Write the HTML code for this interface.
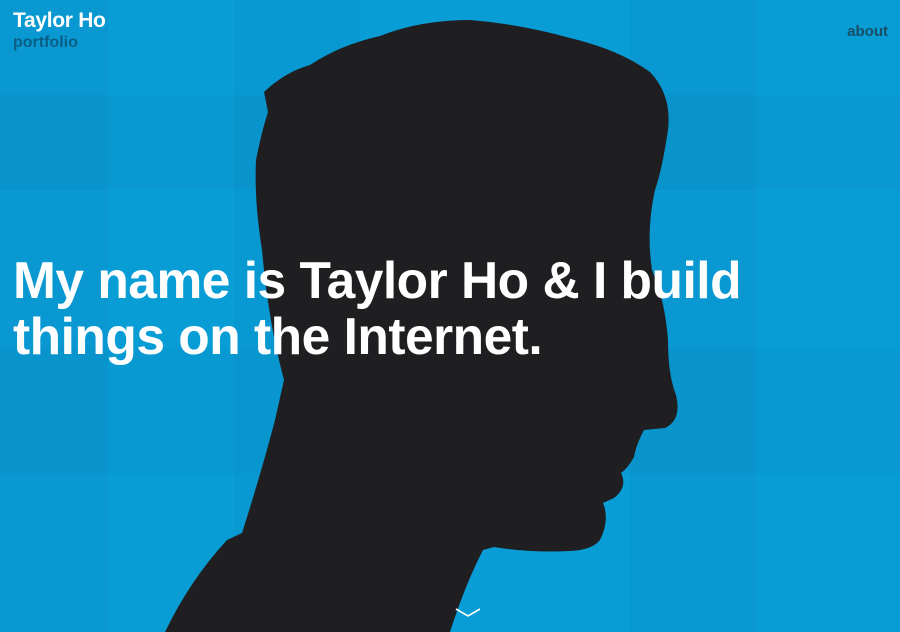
<!DOCTYPE html>
<html><head><meta charset="utf-8"><style>
html,body{margin:0;padding:0;width:900px;height:632px;overflow:hidden;background:#0a9fd8;font-family:"Liberation Sans",Arial,sans-serif}
.bg{position:absolute;inset:0;background:
linear-gradient(90deg,rgba(0,60,110,.05) 0 12%,transparent 12% 26%,rgba(0,60,110,.04) 26% 40%,transparent 40% 70%,rgba(0,60,110,.05) 70% 84%,transparent 84%),
linear-gradient(180deg,transparent 0 15%,rgba(0,50,100,.05) 15% 30%,transparent 30% 55%,rgba(0,50,100,.04) 55% 75%,transparent 75%),#099dd6}
svg{position:absolute;left:0;top:0}
.t1{position:absolute;left:13px;top:9px;color:#fff;font-weight:bold;font-size:21px;letter-spacing:-0.3px}
.t2{position:absolute;left:13px;top:34px;color:#0b5f86;font-weight:bold;font-size:16px}
.ab{position:absolute;right:12px;top:23px;color:#1b4e66;font-weight:bold;font-size:15px}
h1{position:absolute;left:13px;top:252px;margin:0;color:#fff;font-size:51.5px;line-height:56px;font-weight:bold;letter-spacing:-0.5px;width:850px}
</style></head><body>
<div class="bg"></div>
<svg width="900" height="632" viewBox="0 0 900 632">
<path fill="#1f1f22" d="M165,632 Q190,580 227,540 L242,533 Q262,470 275,420 L284,380 Q268,320 262,250 Q254,200 256,160 Q262,130 268,112 L264,92 Q285,72 310,65 Q340,45 380,36 Q420,20 470,20 Q520,24 570,38 Q620,50 650,72 Q672,95 668,130 Q662,170 655,190 Q646,230 652,270 Q665,300 668,340 Q668,375 676,395 Q682,420 665,428 L644,430 Q636,445 634,457 Q628,468 621,473 Q628,487 614,498 L603,503 Q610,520 600,540 Q592,550 570,551 Q530,553 494,547 L483,550 Q465,585 450,632 Z"/>
<path d="M456,609 L468,616 L480,609" fill="none" stroke="#fff" stroke-width="1.6"/>
</svg>
<div class="t1">Taylor Ho</div>
<div class="t2">portfolio</div>
<div class="ab">about</div>
<h1>My name is Taylor Ho &amp; I build<br>things on the Internet.</h1>
</body></html>
